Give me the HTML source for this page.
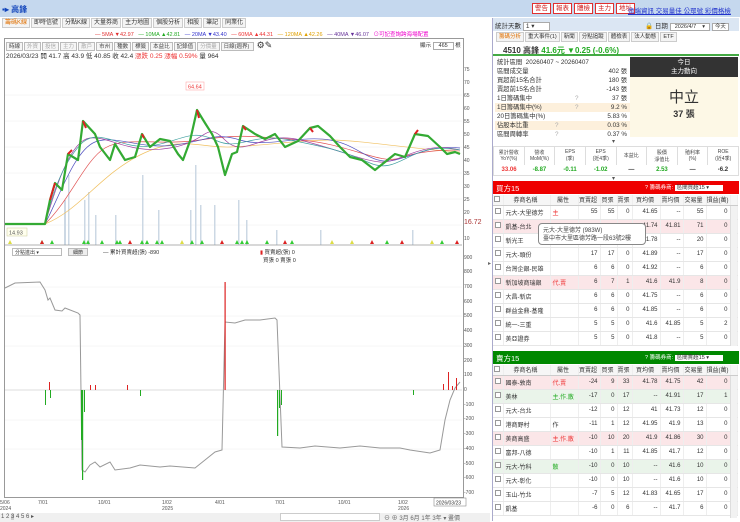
<!DOCTYPE html>
<html><head><meta charset="utf-8"><style>
*{margin:0;padding:0;box-sizing:border-box}
body{width:740px;height:522px;overflow:hidden;background:#fff;font-family:"Liberation Sans","Noto Sans CJK TC",sans-serif;font-size:7px;color:#333;position:relative}
.a{position:absolute}
.tab{display:inline-block;border:1px solid #ccc;background:#f4f4f4;padding:0 2px;height:10px;line-height:9px;font-size:6px;margin-right:1px}
.btn{display:inline-block;border:1px solid #bbb;background:#f6f6f6;padding:0 2px;height:9px;line-height:8px;font-size:5.5px;margin-right:1px;color:#444}
.rb{display:inline-block;border:1px solid #e03030;background:#fff;color:#d02020;padding:0 2px;height:11px;line-height:10px;font-size:6.5px;margin-right:2px}
table{border-collapse:collapse;table-layout:fixed}
td{font-size:6px;white-space:nowrap;overflow:hidden}
.t td{height:14px;border-bottom:1px solid #e6e6e6;text-align:right;padding-right:2px;border-right:1px solid #eee}
.t td.n{text-align:left;padding-left:2px}
.t tr.h td{height:10px;text-align:center;background:#f6f6f6;border-bottom:1px solid #ccc}
.pk{background:#fbe6e8}.gn{background:#eaf4ea}
.cb{display:inline-block;width:6px;height:6px;border:1px solid #999;background:#fff}
.sr{position:relative;height:9px;line-height:9px;font-size:6.3px;padding-left:2px;white-space:nowrap}
.sr b{position:absolute;right:3px;top:0;font-weight:normal}
.sr i{position:absolute;left:80px;color:#aaa;font-style:normal}
.y{background:#fdf0dc}
</style></head><body>
<div class="a" style="left:0;top:0;width:740px;height:17px;background:#c5d8ee"></div>
<div class="a" style="left:2px;top:4px;font-size:8px;color:#1144bb;font-weight:bold">▪▸ 高鋒</div>
<div class="a" style="left:532px;top:3px"><span class="rb">警告</span><span class="rb">報表</span><span class="rb">體檢</span><span class="rb">主力</span><span class="rb">地址</span></div>
<div class="a" style="left:628px;top:5px;font-size:6.5px;color:#2233cc;text-decoration:underline;white-space:nowrap">遠端資訊 交易量佳 公眾號 彩價格檢</div>
<div class="a" style="left:2px;top:18px"><span class="tab" style="color:#e07000">籌碼K線</span><span class="tab">即時信號</span><span class="tab">分點K線</span><span class="tab">大量券商</span><span class="tab">主力地圖</span><span class="tab">個股分析</span><span class="tab">相股</span><span class="tab">筆記</span><span class="tab">同業化</span></div>
<div class="a" style="left:95px;top:30px;font-size:5.5px;white-space:nowrap"><span style="color:#e03030">— 5MA ▼42.97</span> &nbsp; <span style="color:#2a2">— 10MA ▲42.81</span> &nbsp; <span style="color:#33c">— 20MA ▼43.40</span> &nbsp; <span style="color:#e33">— 60MA ▲44.31</span> &nbsp; <span style="color:#e0a000">— 120MA ▲42.26</span> &nbsp; <span style="color:#639">— 40MA ▼46.07</span> &nbsp; <span style="color:#e0c">⊙可記查詢跨海場配置</span></div>
<div class="a" style="left:4px;top:38px;width:460px;height:460px;border:1px solid #999"></div>
<div class="a" style="left:6px;top:40px;white-space:nowrap"><span class="btn">時線</span><span class="btn" style="color:#aaa">外資</span><span class="btn" style="color:#aaa">投信</span><span class="btn" style="color:#aaa">主力</span><span class="btn" style="color:#aaa">散戶</span><span class="btn">市州</span><span class="btn">種數</span><span class="btn">標籤</span><span class="btn">本益比</span><span class="btn">記錄值</span><span class="btn" style="color:#aaa">分價量</span><span class="btn" style="width:33px">日線(週界)</span> <span style="font-size:9px">⚙✎</span></div>
<div class="a" style="left:420px;top:41px;font-size:5.5px">顯示 <span style="border:1px solid #aaa;padding:0 5px">465</span> 根</div>
<div class="a" style="left:6px;top:50px;font-size:6.5px;white-space:nowrap">2026/03/23 開 41.7 高 43.9 低 40.85 收 42.4 <span style="color:#e33">漲跌 0.25 漲幅 0.59%</span> 量 964</div>
<svg class="a" style="left:0;top:55px" width="490" height="467" viewBox="0 55 490 467">
<g stroke="#eee" stroke-width="0.5">
<line x1="5" x2="462" y1="95" y2="95"/><line x1="5" x2="462" y1="121" y2="121"/><line x1="5" x2="462" y1="147" y2="147"/><line x1="5" x2="462" y1="173" y2="173"/><line x1="5" x2="462" y1="199" y2="199"/><line x1="5" x2="462" y1="225" y2="225"/>
<line x1="5" x2="462" y1="287" y2="287"/><line x1="5" x2="462" y1="316" y2="316"/><line x1="5" x2="462" y1="346" y2="346"/><line x1="5" x2="462" y1="420" y2="420"/><line x1="5" x2="462" y1="449" y2="449"/>
</g>
<g fill="#ccd8e4">
<rect x="64" y="200" width="2" height="45"/><rect x="68" y="175" width="1.5" height="70"/><rect x="84" y="200" width="1.5" height="45"/><rect x="88" y="192" width="1.5" height="53"/><rect x="95" y="215" width="1.5" height="30"/><rect x="115" y="215" width="1.5" height="30"/><rect x="142" y="175" width="1.5" height="70"/><rect x="158" y="210" width="1.5" height="35"/><rect x="190" y="210" width="1.5" height="35"/><rect x="195" y="165" width="1.5" height="80"/><rect x="200" y="205" width="1.5" height="40"/><rect x="214" y="205" width="1.5" height="40"/><rect x="238" y="200" width="1.5" height="45"/><rect x="246" y="220" width="1.5" height="25"/><rect x="276" y="230" width="1.5" height="15"/><rect x="320" y="230" width="1.5" height="15"/><rect x="412" y="230" width="1.5" height="15"/>
</g>
<g fill="none" stroke-width="0.7">
<path d="M45 224 C80 210 100 175 140 155 S200 148 230 147 S300 140 330 140 S420 150 460 152" stroke="#f0c060"/>
<path d="M45 224 C70 200 85 160 105 148 S160 146 200 140 S250 136 300 140 S380 165 400 158 S440 150 460 150" stroke="#e05050"/>
<path d="M45 224 C60 195 75 150 95 142 S140 150 175 145 S215 132 240 140 S300 135 330 140 S370 166 395 160 S430 145 460 148" stroke="#5050c0"/>
<path d="M45 224 C55 190 70 140 90 138 S130 155 170 148 S205 120 225 140 S260 130 300 140 S360 160 380 162 S420 140 460 150" stroke="#a040a0"/>
<path d="M45 224 C52 195 62 165 80 145 S120 150 150 146 S190 128 215 140 S250 132 290 140 S340 150 370 163 S410 140 460 150" stroke="#40a0a0"/>
</g>
<path d="M5 224 L45 224 L50 200 L55 183 L62 190 L68 154 L78 160 L83 121 L95 134 L100 147 L110 160 L115 144 L125 160 L135 157 L142 134 L150 147 L160 139 L170 141 L178 154 L183 160 L190 141 L197 110 L205 123 L212 134 L218 147 L225 175 L232 154 L237 152 L243 126 L255 134 L265 139 L275 134 L285 147 L298 141 L310 128 L318 126 L330 136 L340 147 L350 157 L362 160 L375 170 L385 162 L395 154 L405 157 L415 134 L428 136 L440 147 L447 154 L455 152 L460 154" fill="none" stroke="#3a3" stroke-width="2.2" stroke-linejoin="round"/>
<path d="M50 200 L55 183 M68 154 L72 150 M83 121 L86 128 M142 134 L144 138 M197 110 L199 118 M243 126 L246 130 M310 128 L313 132 M415 134 L418 130" stroke="#d22" stroke-width="2"/>
<rect x="186" y="82" width="18" height="8" fill="#fff" stroke="#f99" stroke-width=".5"/><text x="188" y="88.5" font-size="5.5" fill="#e33">64.64</text>
<rect x="7" y="228" width="20" height="8" fill="#ffe" stroke="#cc9" stroke-width=".5"/><text x="9" y="234.5" font-size="5.5" fill="#555">14.93</text>
<text x="464" y="224" font-size="7" fill="#a33">16.72</text>
<g font-size="5" fill="#555">
<text x="464" y="71">75</text><text x="464" y="84">70</text><text x="464" y="97">65</text><text x="464" y="110">60</text><text x="464" y="123">55</text><text x="464" y="136">50</text><text x="464" y="149">45</text><text x="464" y="162">40</text><text x="464" y="175">35</text><text x="464" y="188">30</text><text x="464" y="201">25</text><text x="464" y="214">20</text><text x="464" y="240">10</text>
<text x="464" y="259">900</text><text x="464" y="273">800</text><text x="464" y="288">700</text><text x="464" y="303">600</text><text x="464" y="317">500</text><text x="464" y="332">400</text><text x="464" y="347">300</text><text x="464" y="362">200</text><text x="464" y="376">100</text><text x="464" y="391">0</text><text x="464" y="406">-100</text><text x="464" y="420">-200</text><text x="464" y="435">-300</text><text x="464" y="450">-400</text><text x="464" y="465">-500</text><text x="464" y="479">-600</text><text x="464" y="494">-700</text>
</g>
<line x1="4" x2="462" y1="245" y2="245" stroke="#999" stroke-width=".7"/>
<g fill="#3c3"><path d="M40 244l2-4 2 4zM50 244l2-4 2 4zM82 244l2-4 2 4zM86 244l2-4 2 4zM100 244l2-4 2 4zM115 244l2-4 2 4zM118 244l2-4 2 4zM140 244l2-4 2 4zM145 244l2-4 2 4zM155 244l2-4 2 4zM160 244l2-4 2 4zM190 244l2-4 2 4zM200 244l2-4 2 4zM235 244l2-4 2 4zM240 244l2-4 2 4zM245 244l2-4 2 4zM265 244l2-4 2 4zM290 244l2-4 2 4zM385 244l2-4 2 4zM440 244l2-4 2 4z"/></g>
<g fill="#d22"><path d="M40 244l2-4 2 4zM128 244l2-4 2 4zM220 244l2-4 2 4zM283 244l2-4 2 4zM370 244l2-4 2 4zM400 244l2-4 2 4zM455 244l2-4 2 4z"/></g>
<g fill="#dd4"><path d="M8 244l2-4 2 4zM180 244l2-4 2 4zM330 244l2-4 2 4zM350 244l2-4 2 4zM430 244l2-4 2 4z"/></g>
<line x1="5" x2="462" y1="390" y2="390" stroke="#bbb" stroke-width=".5"/>
<polyline points="5,288 15,283 40,282 45,290 48,300 50,298 55,310 62,311 65,308 78,313 80,315 82,470 85,472 90,465 95,462 100,467 110,462 115,470 130,468 140,465 160,467 170,466 195,468 205,460 215,452 222,450 225,322 235,323 245,320 260,320 275,318 277,320 282,447 300,448 315,446 340,448 360,446 380,448 400,448 410,450 430,453 440,450 445,420 450,400 455,388 460,382" fill="none" stroke="#999" stroke-width="1"/>
<g fill="#d22"><rect x="224.5" y="282" width="1.2" height="108"/><rect x="49" y="382" width="1" height="8"/><rect x="95" y="385" width="1" height="5"/><rect x="90" y="385" width="1" height="5"/><rect x="127" y="385" width="1" height="5"/><rect x="443" y="384" width="1" height="6"/><rect x="448" y="372" width="1" height="18"/><rect x="456" y="378" width="1" height="12"/><rect x="452" y="386" width="1" height="4"/></g>
<g fill="#2a2"><rect x="82" y="390" width="1.2" height="90"/><rect x="81" y="390" width="1" height="50"/><rect x="84" y="390" width="1" height="22"/><rect x="45" y="390" width="1" height="15"/><rect x="50" y="390" width="1" height="8"/><rect x="140" y="390" width="1" height="6"/><rect x="277" y="390" width="1.2" height="46"/><rect x="279" y="390" width="1" height="18"/><rect x="281" y="390" width="1" height="15"/><rect x="413" y="390" width="1" height="5"/></g>
<g font-size="5" fill="#555"><text x="0" y="504">5/06</text><text x="0" y="510">2024</text><text x="38" y="504">7/01</text><text x="98" y="504">10/01</text><text x="162" y="504">1/02</text><text x="162" y="510">2025</text><text x="215" y="504">4/01</text><text x="275" y="504">7/01</text><text x="338" y="504">10/01</text><text x="398" y="504">1/02</text><text x="398" y="510">2026</text></g>
<rect x="434" y="498" width="32" height="8" fill="#fff" stroke="#777" stroke-width=".5"/><text x="436" y="504.5" font-size="5" fill="#333">2026/03/23</text>
</svg>
<div class="a" style="left:12px;top:248px;width:50px;height:8px;border:1px solid #bbb;font-size:5px;padding-left:2px;background:#fff">分點進出 ▾</div>
<div class="a" style="left:68px;top:248px;width:20px;height:8px;border:1px solid #bbb;background:#eee;font-size:5px;text-align:center">細節</div>
<div class="a" style="left:103px;top:248px;font-size:5.5px;white-space:nowrap">— 累計買賣超(張) -890</div>
<div class="a" style="left:260px;top:248px;font-size:5.5px;white-space:nowrap"><span style="color:#d22">▮</span> 買賣超(張) 0<br>&nbsp; 買張 0 賣張 0</div>
<div class="a" style="left:0;top:513px;width:490px;height:9px;background:#f0f0f0"></div>
<div class="a" style="left:1px;top:513px;font-size:6px;color:#555">1 2 <span style="background:#ccc">3</span> 4 5 6 ▸</div>
<div class="a" style="left:280px;top:513px;width:100px;height:8px;border:1px solid #ccc;background:#fff"></div>
<div class="a" style="left:384px;top:513px;font-size:6px;color:#666;white-space:nowrap">⊖ ⊕ 3月 6月 1年 3年 ▾ 畫價</div>
<div class="a" style="left:488px;top:260px;font-size:6px;color:#666">▸</div>
<div class="a" style="left:493px;top:18px;width:246px;height:13px;background:#dbe6f3"></div>
<div class="a" style="left:495px;top:20px;font-size:6.5px;white-space:nowrap">統計天數 <span style="border:1px solid #aaa;background:#fff;padding:0 14px 0 2px">1 ▾</span></div>
<div class="a" style="left:645px;top:20px;font-size:6.5px;white-space:nowrap">🔒 日期 <span style="border:1px solid #aaa;background:#fff;padding:0 4px;font-size:5.5px">2026/4/7 &nbsp;&nbsp;&nbsp;▾</span> <span style="border:1px solid #aaa;background:#fff;padding:0 2px;font-size:5.5px">今天</span></div>
<div class="a" style="left:496px;top:32px;white-space:nowrap"><span class="tab" style="color:#e07000;font-size:5.5px">籌碼分析</span><span class="tab" style="font-size:5.5px">重大事件(1)</span><span class="tab" style="font-size:5.5px">新聞</span><span class="tab" style="font-size:5.5px">分點追蹤</span><span class="tab" style="font-size:5.5px">體檢表</span><span class="tab" style="font-size:5.5px">法人動態</span><span class="tab" style="font-size:5.5px">ETF</span></div>
<div class="a" style="left:493px;top:43px;width:246px;height:13px;border-bottom:2px solid #4a4"></div>
<div class="a" style="left:503px;top:45px;font-size:8px;font-weight:bold;white-space:nowrap">4510 高鋒 <span style="color:#2a2">41.6元 ▼0.25 (-0.6%)</span></div>
<div class="a" style="left:495px;top:58px;width:135px">
<div class="sr">統計區間 &nbsp;20260407 ~ 20260407</div>
<div class="sr">區間成交量<b>402 張</b></div>
<div class="sr">買超前15名合計<b>180 張</b></div>
<div class="sr">賣超前15名合計<b>-143 張</b></div>
<div class="sr">1日籌碼集中<i>?</i><b>37 張</b></div>
<div class="sr y">1日籌碼集中(%)<i>?</i><b>9.2 %</b></div>
<div class="sr">20日籌碼集中(%)<b>5.83 %</b></div>
<div class="sr y">佔股本比重<i style="left:60px">?</i><b>0.03 %</b></div>
<div class="sr">區間周轉率<i style="left:60px">?</i><b>0.37 %</b></div>
</div>
<div class="a" style="left:630px;top:57px;width:108px;height:20px;background:#333;color:#fff;text-align:center;font-size:6.5px;line-height:9px;padding-top:1px">今日<br>主力動向</div>
<div class="a" style="left:630px;top:77px;width:108px;height:60px;background:#fdf8e6;text-align:center"><div style="font-size:15px;margin-top:9px;color:#333">中立</div><div style="font-size:9px;font-weight:bold">37 張</div></div>
<div class="a" style="left:612px;top:138px;font-size:6px;color:#555">▾</div>
<table class="a" style="left:493px;top:146px;width:246px;border:1px solid #ddd">
<tr style="height:18px;color:#444"><td style="font-size:5px;border-right:1px solid #ddd;text-align:center">累計營收<br>YoY(%)</td><td style="font-size:5px;border-right:1px solid #ddd;text-align:center">營收<br>MoM(%)</td><td style="font-size:5px;border-right:1px solid #ddd;text-align:center">EPS<br>(季)</td><td style="font-size:5px;border-right:1px solid #ddd;text-align:center">EPS<br>(近4季)</td><td style="font-size:5px;border-right:1px solid #ddd;text-align:center">本益比</td><td style="font-size:5px;border-right:1px solid #ddd;text-align:center">股價<br>淨值比</td><td style="font-size:5px;border-right:1px solid #ddd;text-align:center">殖利率<br>(%)</td><td style="font-size:5px;text-align:center">ROE<br>(近4季)</td></tr>
<tr style="height:11px;font-weight:bold"><td style="color:#e33;text-align:center">33.06</td><td style="color:#2a2;text-align:center">-8.87</td><td style="color:#2a2;text-align:center">-0.11</td><td style="color:#2a2;text-align:center">-1.02</td><td style="text-align:center">—</td><td style="color:#2a2;text-align:center">2.53</td><td style="text-align:center">—</td><td style="text-align:center">-6.2</td></tr>
</table>
<div class="a" style="left:612px;top:175px;font-size:6px;color:#555">▾</div>
<div class="a" style="left:493px;top:181px;width:246px;height:13px;background:#e00;color:#fff;font-size:7.5px;padding:2px 3px">買方15 <span style="position:absolute;left:152px;top:2px;font-size:5.5px;white-space:nowrap">? 籌碼券商: <span style="background:#fff;color:#333;padding:0 14px 0 2px">區間買超15 ▾</span></span></div>
<div class="a" style="left:493px;top:351px;width:246px;height:13px;background:#080;color:#fff;font-size:7.5px;padding:2px 3px">賣方15 <span style="position:absolute;left:152px;top:2px;font-size:5.5px;white-space:nowrap">? 籌碼券商: <span style="background:#fff;color:#333;padding:0 14px 0 2px">區間賣超15 ▾</span></span></div>
<table class="a t" style="left:493px;top:195px;width:244px">
<colgroup><col style="width:10px"><col style="width:47px"><col style="width:28px"><col style="width:22px"><col style="width:17px"><col style="width:15px"><col style="width:28px"><col style="width:23px"><col style="width:23px"><col style="width:24px"><col style="width:7px"></colgroup>
<tr class="h"><td><span class="cb"></span></td><td>券商名稱</td><td>屬性</td><td>買賣超</td><td>買張</td><td>賣張</td><td>買均價</td><td>賣均價</td><td>交易量</td><td>損益(萬)</td><td></td></tr>
<tr><td><span class="cb"></span></td><td class="n">元大-大里德芳</td><td class="n" style="color:#e33">主</td><td>55</td><td>55</td><td>0</td><td>41.65</td><td>--</td><td>55</td><td>0</td><td></td></tr>
<tr class="pk"><td><span class="cb"></span></td><td class="n">凱基-台北</td><td></td><td></td><td></td><td></td><td>41.74</td><td>41.81</td><td>71</td><td>0</td><td></td></tr>
<tr><td><span class="cb"></span></td><td class="n">新光王</td><td></td><td></td><td></td><td></td><td>41.78</td><td>--</td><td>20</td><td>0</td><td></td></tr>
<tr><td><span class="cb"></span></td><td class="n">元大-頭份</td><td></td><td>17</td><td>17</td><td>0</td><td>41.89</td><td>--</td><td>17</td><td>0</td><td></td></tr>
<tr><td><span class="cb"></span></td><td class="n">台灣企銀-民雄</td><td></td><td>6</td><td>6</td><td>0</td><td>41.92</td><td>--</td><td>6</td><td>0</td><td></td></tr>
<tr class="pk"><td><span class="cb"></span></td><td class="n">新加坡商瑞銀</td><td class="n" style="color:#e33">代.賣</td><td>6</td><td>7</td><td>1</td><td>41.6</td><td>41.9</td><td>8</td><td>0</td><td></td></tr>
<tr><td><span class="cb"></span></td><td class="n">大昌-新店</td><td></td><td>6</td><td>6</td><td>0</td><td>41.75</td><td>--</td><td>6</td><td>0</td><td></td></tr>
<tr><td><span class="cb"></span></td><td class="n">群益金鼎-基隆</td><td></td><td>6</td><td>6</td><td>0</td><td>41.85</td><td>--</td><td>6</td><td>0</td><td></td></tr>
<tr><td><span class="cb"></span></td><td class="n">統一-三重</td><td></td><td>5</td><td>5</td><td>0</td><td>41.6</td><td>41.85</td><td>5</td><td>2</td><td></td></tr>
<tr><td><span class="cb"></span></td><td class="n">美亞證券</td><td></td><td>5</td><td>5</td><td>0</td><td>41.8</td><td>--</td><td>5</td><td>0</td><td></td></tr>
</table>
<div class="a" style="left:538px;top:223px;width:108px;height:22px;background:#fff;border:1px solid #888;border-radius:4px;font-size:6px;padding:3px 4px;line-height:8px;color:#444;white-space:nowrap">元大-大里德芳 (983W)<br>臺中市大里區德芳路一段63號2樓</div>
<table class="a t" style="left:493px;top:365px;width:244px">
<colgroup><col style="width:10px"><col style="width:47px"><col style="width:28px"><col style="width:22px"><col style="width:17px"><col style="width:15px"><col style="width:28px"><col style="width:23px"><col style="width:23px"><col style="width:24px"><col style="width:7px"></colgroup>
<tr class="h"><td><span class="cb"></span></td><td>券商名稱</td><td>屬性</td><td>買賣超</td><td>買張</td><td>賣張</td><td>買均價</td><td>賣均價</td><td>交易量</td><td>損益(萬)</td><td></td></tr>
<tr class="pk"><td><span class="cb"></span></td><td class="n">國泰-敦南</td><td class="n" style="color:#e33">代.賣</td><td>-24</td><td>9</td><td>33</td><td>41.78</td><td>41.75</td><td>42</td><td>0</td><td></td></tr>
<tr class="gn"><td><span class="cb"></span></td><td class="n">美林</td><td class="n" style="color:#2a2">主.作.散</td><td>-17</td><td>0</td><td>17</td><td>--</td><td>41.91</td><td>17</td><td>1</td><td></td></tr>
<tr><td><span class="cb"></span></td><td class="n">元大-台北</td><td></td><td>-12</td><td>0</td><td>12</td><td>41</td><td>41.73</td><td>12</td><td>0</td><td></td></tr>
<tr><td><span class="cb"></span></td><td class="n">港商野村</td><td class="n">作</td><td>-11</td><td>1</td><td>12</td><td>41.95</td><td>41.9</td><td>13</td><td>0</td><td></td></tr>
<tr class="pk"><td><span class="cb"></span></td><td class="n">美商高盛</td><td class="n" style="color:#e33">主.作.散</td><td>-10</td><td>10</td><td>20</td><td>41.9</td><td>41.86</td><td>30</td><td>0</td><td></td></tr>
<tr><td><span class="cb"></span></td><td class="n">富邦-八德</td><td></td><td>-10</td><td>1</td><td>11</td><td>41.85</td><td>41.7</td><td>12</td><td>0</td><td></td></tr>
<tr class="gn"><td><span class="cb"></span></td><td class="n">元大-竹科</td><td class="n" style="color:#2a2">散</td><td>-10</td><td>0</td><td>10</td><td>--</td><td>41.6</td><td>10</td><td>0</td><td></td></tr>
<tr><td><span class="cb"></span></td><td class="n">元大-彰化</td><td></td><td>-10</td><td>0</td><td>10</td><td>--</td><td>41.6</td><td>10</td><td>0</td><td></td></tr>
<tr><td><span class="cb"></span></td><td class="n">玉山-竹北</td><td></td><td>-7</td><td>5</td><td>12</td><td>41.83</td><td>41.65</td><td>17</td><td>0</td><td></td></tr>
<tr><td><span class="cb"></span></td><td class="n">凱基</td><td></td><td>-6</td><td>0</td><td>6</td><td>--</td><td>41.7</td><td>6</td><td>0</td><td></td></tr>
</table>
<div class="a" style="left:730px;top:206px;width:7px;height:140px;background:#f2f2f2;border-left:1px solid #ddd"></div>
<div class="a" style="left:730px;top:376px;width:7px;height:142px;background:#f2f2f2;border-left:1px solid #ddd"></div>
<div class="a" style="left:492px;top:18px;width:1px;height:503px;background:#aac"></div>
</body></html>
